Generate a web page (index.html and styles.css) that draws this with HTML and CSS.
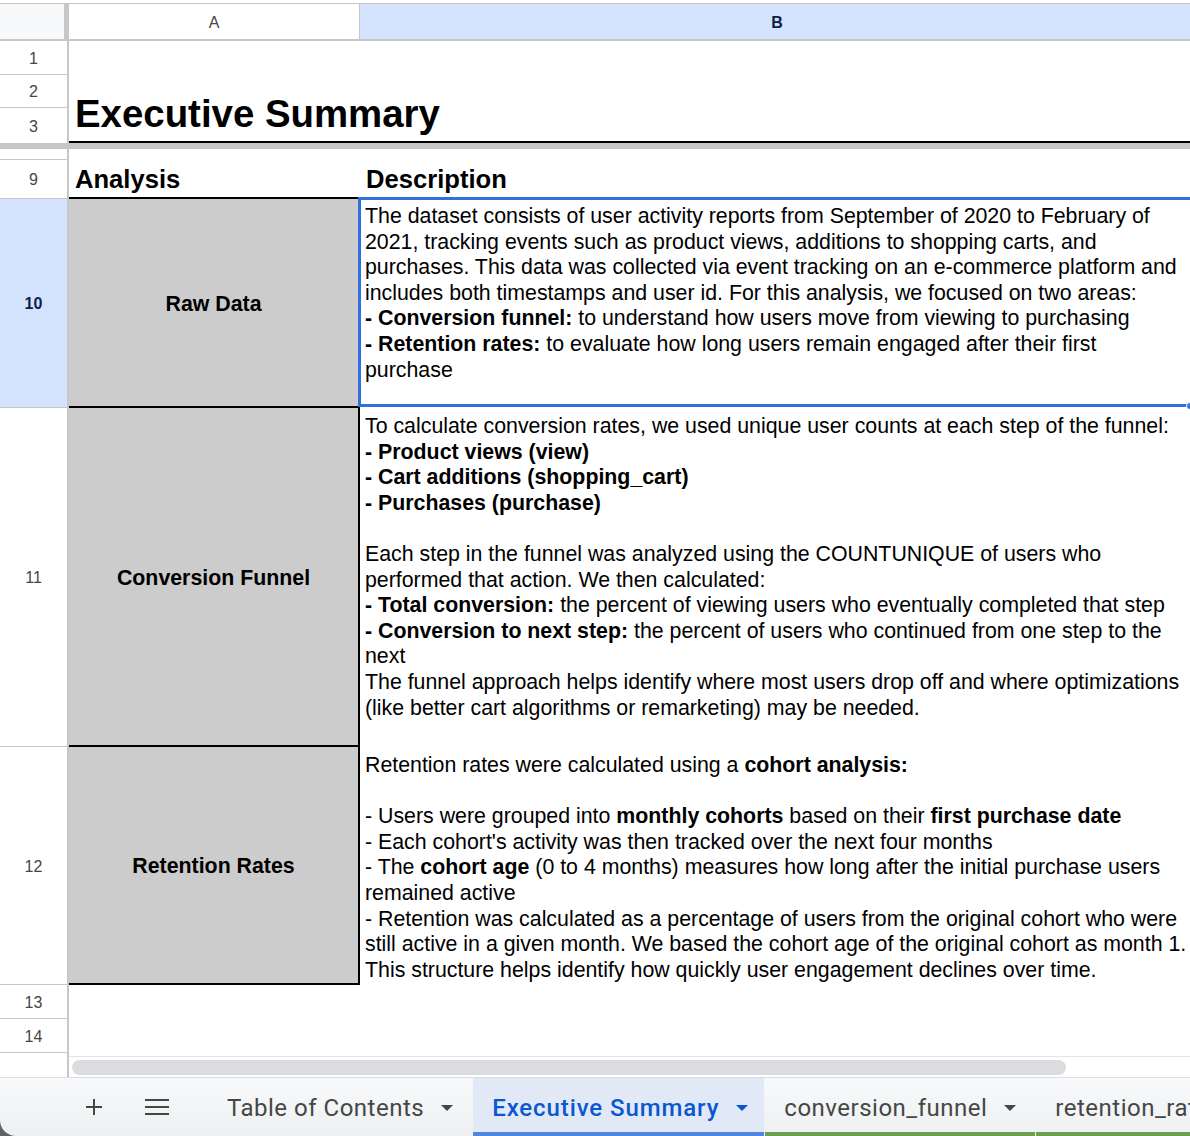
FILE: index.html
```html
<!DOCTYPE html>
<html lang="en">
<head>
<meta charset="utf-8">
<title>Executive Summary</title>
<link rel="stylesheet" href="styles.css">
</head>
<body>
<div class="sheet">
  <div class="colhead">
    <div class="corner"></div>
    <div class="ch ch-a">A</div>
    <div class="ch ch-b">B</div>
  </div>

  <div class="frozen">
    <div class="rh r1">1</div>
    <div class="rh r2">2</div>
    <div class="rh r3">3</div>
    <div class="title">Executive Summary</div>
  </div>

  <div class="divider"></div>

  <div class="grid">
    <div class="rh"></div>
    <div class="cell"></div>
    <div class="cell"></div>

    <div class="rh">9</div>
    <div class="head head-a">Analysis</div>
    <div class="head head-b">Description</div>

    <div class="rh rh-sel">10</div>
    <div class="label">Raw Data</div>
    <div class="desc selected">
      <div class="txt">The dataset consists of user activity reports from September of 2020 to February of 2021, tracking events such as product views, additions to shopping carts, and purchases. This data was collected via event tracking on an e-commerce platform and includes both timestamps and user id. For this analysis, we focused on two areas:<br><b>- Conversion funnel:</b> to understand how users move from viewing to purchasing<br><b>- Retention rates:</b> to evaluate how long users remain engaged after their first purchase</div>
      <span class="handle"></span>
    </div>

    <div class="rh">11</div>
    <div class="label">Conversion Funnel</div>
    <div class="desc">
      <div class="txt">To calculate conversion rates, we used unique user counts at each step of the funnel:<br><b>- Product views (view)</b><br><b>- Cart additions (shopping_cart)</b><br><b>- Purchases (purchase)</b><br><br>Each step in the funnel was analyzed using the COUNTUNIQUE of users who performed that action. We then calculated:<br><b>- Total conversion:</b> the percent of viewing users who eventually completed that step<br><b>- Conversion to next step:</b> the percent of users who continued from one step to the next<br>The funnel approach helps identify where most users drop off and where optimizations (like better cart algorithms or remarketing) may be needed.</div>
    </div>

    <div class="rh">12</div>
    <div class="label">Retention Rates</div>
    <div class="desc">
      <div class="txt">Retention rates were calculated using a <b>cohort analysis:</b><br><br>- Users were grouped into <b>monthly cohorts</b> based on their <b>first purchase date</b><br>- Each cohort's activity was then tracked over the next four months<br>- The <b>cohort age</b> (0 to 4 months) measures how long after the initial purchase users remained active<br>- Retention was calculated as a percentage of users from the original cohort who were still active in a given month. We based the cohort age of the original cohort as month 1.<br>This structure helps identify how quickly user engagement declines over time.</div>
    </div>

    <div class="rh">13</div>
    <div class="cell"></div>
    <div class="cell"></div>

    <div class="rh">14</div>
    <div class="cell"></div>
    <div class="cell"></div>
  </div>

  <div class="scrollrow">
    <div class="sr-left"></div>
    <div class="sr-track"><div class="thumb"></div></div>
  </div>

  <div class="tabwrap">
    <div class="tabbar">
      <svg class="ic-plus" width="20" height="20" viewBox="0 0 20 20"><path d="M10 2v16M2 10h16" stroke="#444746" stroke-width="2" fill="none"/></svg>
      <svg class="ic-menu" width="24" height="16" viewBox="0 0 24 16"><path d="M0 1h24M0 8h24M0 15h24" stroke="#444746" stroke-width="2" fill="none"/></svg>
      <div class="tab first"><span>Table of Contents</span><svg class="tri" width="12" height="6" viewBox="0 0 12 6"><path d="M0 0h12L6 6z"/></svg></div>
      <div class="tab active"><span>Executive Summary</span><svg class="tri" width="12" height="6" viewBox="0 0 12 6"><path d="M0 0h12L6 6z"/></svg></div>
      <div class="tab green"><span>conversion_funnel</span><svg class="tri" width="12" height="6" viewBox="0 0 12 6"><path d="M0 0h12L6 6z"/></svg></div>
      <div class="tab green"><span>retention_rates</span><svg class="tri" width="12" height="6" viewBox="0 0 12 6"><path d="M0 0h12L6 6z"/></svg></div>
    </div>
  </div>
</div>
</body>
</html>
```

FILE: styles.css
```css
* {
  box-sizing: border-box;
}

html,
body {
  margin: 0;
  padding: 0;
}

body {
  width: 1190px;
  height: 1136px;
  overflow: hidden;
  background: #ffffff;
  font-family: "Liberation Sans", Arial, sans-serif;
  color: #000000;
}

.sheet {
  width: 1190px;
  overflow: hidden;
}

/* column header */
.colhead {
  display: grid;
  grid-template-columns: 69px 291px 834px;
  height: 38px;
  margin-top: 3px;
  border-top: 1px solid #c7c7c7;
  border-bottom: 2px solid #c7c7c7;
}

.corner {
  background: #f8f9fa;
  border-right: 5px solid #c7c7c7;
}

.ch {
  display: flex;
  align-items: center;
  justify-content: center;
  padding-top: 2px;
  font-size: 16px;
  color: #444746;
}

.ch-a {
  border-right: 1px solid #c7c7c7;
}

.ch-b {
  background: #d3e3fd;
  font-weight: bold;
  color: #0b1f4a;
}

/* frozen rows */
.frozen {
  display: grid;
  grid-template-columns: 69px 291px 834px;
  grid-template-rows: 34px 33px 35px;
}

.rh {
  display: flex;
  align-items: center;
  justify-content: center;
  padding-top: 2px;
  font-size: 16px;
  color: #444746;
  background: #ffffff;
  border-right: 2px solid #c7c7c7;
  border-bottom: 1px solid #c7c7c7;
}

.frozen .r1 { grid-row: 1; grid-column: 1; }
.frozen .r2 { grid-row: 2; grid-column: 1; }
.frozen .r3 { grid-row: 3; grid-column: 1; border-bottom: 0; }

.title {
  grid-column: 2 / 4;
  grid-row: 1 / 4;
  align-self: end;
  font-size: 38.4px;
  font-weight: bold;
  padding: 0 0 5px 6px;
  border-bottom: 2px solid #000000;
}

.divider {
  height: 6px;
  background: #c7c7c7;
}

/* body grid */
.grid {
  display: grid;
  grid-template-columns: 69px 291px 834px;
  grid-template-rows: 11px 39px 209px 339px 238px 34px 34px;
}

.rh-sel {
  background: #d3e3fd;
  font-weight: bold;
  color: #0b1f4a;
}

.head {
  display: flex;
  align-items: flex-end;
  font-size: 25.6px;
  font-weight: bold;
  padding: 0 0 3px 6px;
}

.head-a {
  border-bottom: 2px solid #000000;
}

.head-b {
  padding-bottom: 5px;
}

.label {
  display: flex;
  align-items: center;
  justify-content: center;
  padding-top: 3px;
  background: #cccccc;
  border-right: 2px solid #000000;
  border-bottom: 2px solid #000000;
  font-size: 21.33px;
  font-weight: bold;
}

.desc {
  position: relative;
  padding: 6px 0 0 5px;
  font-size: 21.33px;
  line-height: 25.6px;
}

.desc.selected {
  padding-top: 5px;
}

.desc .txt {
  width: 823px;
}

.desc b {
  font-weight: bold;
}

.selected::after {
  content: "";
  position: absolute;
  left: -2px;
  top: -2px;
  right: -10px;
  bottom: 1px;
  border: 3px solid #2f6fde;
  pointer-events: none;
}

.handle {
  position: absolute;
  left: 826px;
  bottom: -2px;
  width: 8px;
  height: 8px;
  background: #2f6fde;
  border: 1px solid #ffffff;
  border-radius: 50%;
  z-index: 2;
}

/* scroll row */
.scrollrow {
  display: grid;
  grid-template-columns: 69px 1fr;
  height: 24px;
}

.sr-left {
  background: #ffffff;
  border-right: 2px solid #c7c7c7;
}

.sr-track {
  margin-top: 3px;
  border-top: 1px solid #e3e3e3;
  padding: 3px 0 0 3px;
}

.thumb {
  width: 994px;
  height: 15px;
  border-radius: 8px;
  background: #dadce0;
}

/* tab bar */
.tabwrap {
  background: #5f6368;
}

.tabbar {
  height: 59px;
  display: flex;
  align-items: stretch;
  border-top: 1px solid #dadce0;
  border-bottom-left-radius: 16px;
  background: linear-gradient(#f8f9fa, #eef0f1);
  font-family: Roboto, "Liberation Sans", sans-serif;
  font-size: 24px;
  color: #444746;
  overflow: hidden;
}

.ic-plus {
  align-self: center;
  margin-left: 84px;
  flex-shrink: 0;
}

.ic-menu {
  align-self: center;
  margin-left: 41px;
  flex-shrink: 0;
}

.tab {
  position: relative;
  display: flex;
  align-items: center;
  gap: 17px;
  padding: 1px 19px 0;
  flex-shrink: 0;
  white-space: nowrap;
  letter-spacing: 0.5px;
}

.tab.first {
  margin-left: 39px;
}

.tab + .tab {
  margin-left: 1px;
}

.tri {
  fill: currentColor;
  flex-shrink: 0;
}

.tab.active {
  background: #e1e9f7;
  color: #0b57d0;
  font-weight: 500;
  letter-spacing: 0.9px;
  padding-right: 16px;
}

.tab.active::after,
.tab.green::after {
  content: "";
  position: absolute;
  left: 0;
  right: 0;
  bottom: 0;
  height: 4px;
}

.tab.active::after {
  background: #4f86e0;
}

.tab.green::after {
  background: #6d9e4f;
}
```
